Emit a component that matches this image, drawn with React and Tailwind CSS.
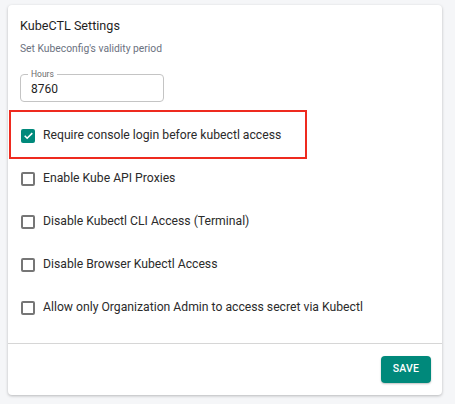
import React, { useState } from "react";

const OPTIONS = [
  { key: "consoleLogin", label: "Require console login before kubectl access", checked: true, highlight: true },
  { key: "apiProxies", label: "Enable Kube API Proxies", checked: false },
  { key: "disableCli", label: "Disable Kubectl CLI Access (Terminal)", checked: false },
  { key: "disableBrowser", label: "Disable Browser Kubectl Access", checked: false },
  { key: "orgAdminSecret", label: "Allow only Organization Admin to access secret via Kubectl", checked: false },
];

const Checkbox = ({ checked, onChange }) => (
  <button
    type="button"
    onClick={onChange}
    className={`flex h-[14px] w-[14px] shrink-0 items-center justify-center rounded-[2px] ${
      checked ? "bg-[#00897b]" : "border-2 border-[#767676] bg-white"
    }`}
  >
    {checked && (
      <svg viewBox="0 0 24 24" className="h-[13px] w-[13px]" fill="none" stroke="white" strokeWidth="3">
        <path d="M5 12.5l4.5 4.5L19 7.5" />
      </svg>
    )}
  </button>
);

const App = () => {
  const [hours, setHours] = useState("8760");
  const [values, setValues] = useState(
    Object.fromEntries(OPTIONS.map((o) => [o.key, o.checked]))
  );

  const toggle = (key) => setValues((prev) => ({ ...prev, [key]: !prev[key] }));

  return (
    <div className="min-h-[404px] bg-[#f5f6f8] pt-[5px] pl-[8px] font-['Roboto',sans-serif]">
      <div className="flex h-[390px] w-[434px] flex-col rounded-[4px] bg-white shadow-[0_1px_3px_rgba(0,0,0,0.25)]">
        <div className="px-[12px] pt-[11px]">
          <h1 className="text-[12.6px] leading-[20px] text-[#1f1f1f]">KubeCTL Settings</h1>
          <p className="mt-[5px] text-[10.3px] leading-[16px] text-[#6b7280]">
            Set Kubeconfig's validity period
          </p>

          <div className="relative mt-[17px] h-[28px] w-[144px] rounded-[4px] border border-[#c4c4c4]">
            <span className="absolute -top-[6px] left-[7px] bg-white px-[3px] text-[8.5px] leading-[11px] text-[#6b6b6b]">
              Hours
            </span>
            <input
              value={hours}
              onChange={(e) => setHours(e.target.value)}
              className="h-full w-full bg-transparent px-[10px] pt-[1px] text-[12px] text-[#1f1f1f] outline-none"
            />
          </div>

          <div className="mt-[12px]">
            {OPTIONS.map((option) => (
              <div key={option.key} className="relative flex h-[43px] items-center gap-[8px] pl-[1px]">
                {option.highlight && (
                  <div className="pointer-events-none absolute -top-[4.5px] -left-[11px] h-[49px] w-[298px] border-2 border-[#ee2a1f]" />
                )}
                <Checkbox checked={values[option.key]} onChange={() => toggle(option.key)} />
                <span className="text-[12.2px] text-[#2b2b2b]">{option.label}</span>
              </div>
            ))}
          </div>
        </div>

        <div className="mt-[13.5px] h-px bg-[#d6d6d6]" />

        <div className="flex justify-end pt-[12px] pr-[11px]">
          <button
            type="button"
            className="h-[27px] w-[50px] rounded-[4px] bg-[#00897b] text-[10.5px] font-medium tracking-[0.2px] text-white shadow-[0_1px_2px_rgba(0,0,0,0.25)]"
          >
            SAVE
          </button>
        </div>
      </div>
    </div>
  );
};

export default App;
